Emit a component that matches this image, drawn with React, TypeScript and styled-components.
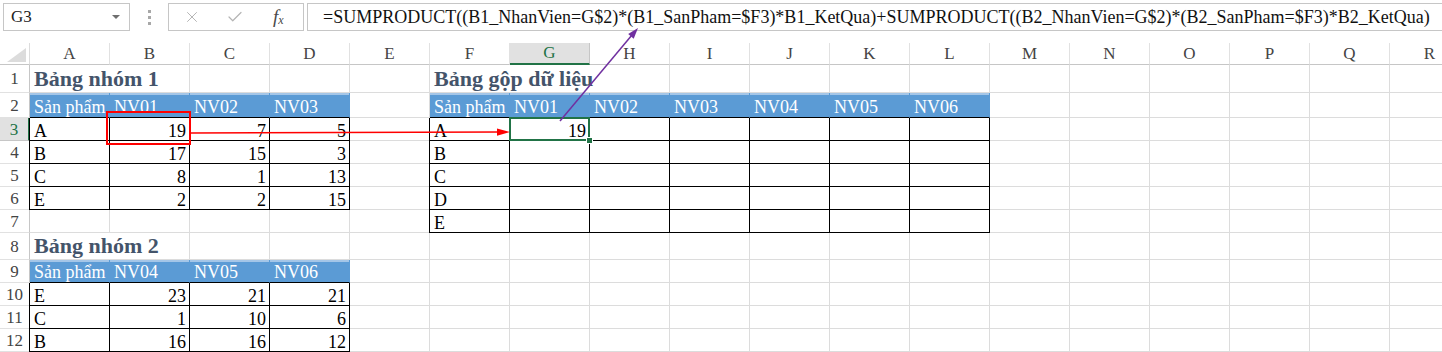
import React from 'react';
import styled, { createGlobalStyle, css } from 'styled-components';
import { X, Check } from 'lucide-react';

const GlobalStyle = createGlobalStyle`
  html, body {
    margin: 0;
    padding: 0;
    background: #fff;
  }
  body {
    font-family: 'Liberation Serif', 'Times New Roman', serif;
  }
`;

const FORMULA =
  '=SUMPRODUCT((B1_NhanVien=G$2)*(B1_SanPham=$F3)*B1_KetQua)+SUMPRODUCT((B2_NhanVien=G$2)*(B2_SanPham=$F3)*B2_KetQua)';

const COLS = ['A', 'B', 'C', 'D', 'E', 'F', 'G', 'H', 'I', 'J', 'K', 'L', 'M', 'N', 'O', 'P', 'Q', 'R'];
const ROW_HEIGHTS = [28, 25, 23, 23, 23, 23, 23, 27, 23, 23, 23, 23];
const ACTIVE_COL = 6;
const ACTIVE_ROW = 3;

type Kind = 'blank' | 'title' | 'head' | 'data';
type Value = string | number | null;

interface CellDef {
  kind: Kind;
  value?: Value;
  span?: number;
  first?: boolean;
  selected?: boolean;
}

const cells: Record<string, CellDef> = {};
const key = (c: number, r: number) => `${c}:${r}`;

function addTable(col: number, row: number, title: string, titleSpan: number, header: string[], body: Value[][]) {
  cells[key(col, row)] = { kind: 'title', value: title, span: titleSpan };
  header.forEach((h, i) => {
    cells[key(col + i, row + 1)] = { kind: 'head', value: h };
  });
  body.forEach((line, j) => {
    line.forEach((v, i) => {
      cells[key(col + i, row + 2 + j)] = { kind: 'data', value: v, first: i === 0 };
    });
  });
}

addTable(0, 1, 'Bảng nhóm 1', 2, ['Sản phẩm', 'NV01', 'NV02', 'NV03'], [
  ['A', 19, 7, 5],
  ['B', 17, 15, 3],
  ['C', 8, 1, 13],
  ['E', 2, 2, 15],
]);

addTable(0, 8, 'Bảng nhóm 2', 2, ['Sản phẩm', 'NV04', 'NV05', 'NV06'], [
  ['E', 23, 21, 21],
  ['C', 1, 10, 6],
  ['B', 16, 16, 12],
]);

const empty = (n: number): Value[] => Array.from({ length: n }, () => null);
addTable(5, 1, 'Bảng gộp dữ liệu', 3, ['Sản phẩm', 'NV01', 'NV02', 'NV03', 'NV04', 'NV05', 'NV06'], [
  ['A', 19, ...empty(5)],
  ['B', ...empty(6)],
  ['C', ...empty(6)],
  ['D', ...empty(6)],
  ['E', ...empty(6)],
]);
cells[key(ACTIVE_COL, ACTIVE_ROW)].selected = true;

// arrow head polygon for a line ending at (x2,y2)
function arrowHead(x1: number, y1: number, x2: number, y2: number, len = 12, half = 4) {
  const dx = x2 - x1;
  const dy = y2 - y1;
  const d = Math.hypot(dx, dy);
  const ux = dx / d;
  const uy = dy / d;
  const bx = x2 - ux * len;
  const by = y2 - uy * len;
  return `${x2},${y2} ${bx - uy * half},${by + ux * half} ${bx + uy * half},${by - ux * half}`;
}

const App: React.FC = () => {
  const rows = ROW_HEIGHTS.map((_, ri) => {
    const r = ri + 1;
    const out: React.ReactNode[] = [
      <RowHead key={`rh${r}`} $active={r === ACTIVE_ROW}>
        {r}
      </RowHead>,
    ];
    let c = 0;
    while (c < COLS.length) {
      const def = cells[key(c, r)] ?? { kind: 'blank' };
      const span = def.span ?? 1;
      out.push(
        <Cell
          key={`${c}-${r}`}
          $kind={def.kind}
          $span={span}
          $first={!!def.first}
          $selected={!!def.selected}
          $numeric={typeof def.value === 'number'}
        >
          {def.value}
        </Cell>
      );
      c += span;
    }
    return out;
  });

  return (
    <Page>
      <GlobalStyle />
      <FormulaBar>
        <NameBox>
          G3
          <Caret />
        </NameBox>
        <Grip>
          <Dot />
          <Dot />
          <Dot />
        </Grip>
        <FxBox>
          <X size={18} strokeWidth={1.3} color="#b4b4b4" />
          <Check size={18} strokeWidth={1.6} color="#b4b4b4" />
          <FxLabel>
            f<sub>x</sub>
          </FxLabel>
        </FxBox>
        <FormulaInput>{FORMULA}</FormulaInput>
      </FormulaBar>

      <Sheet>
        <Corner>
          <svg width="30" height="22" viewBox="0 0 30 22">
            <polygon points="7,19 26,19 26,5" fill="#dcdcdc" />
          </svg>
        </Corner>
        {COLS.map((col, i) => (
          <ColHead key={col} $active={i === ACTIVE_COL}>
            {col}
          </ColHead>
        ))}
        {rows}
      </Sheet>

      <Overlay width="1442" height="352" viewBox="0 0 1442 352">
        <rect x="107" y="112" width="83" height="32" fill="none" stroke="#ff0000" strokeWidth="2" />
        <line x1="191" y1="133" x2="500" y2="132" stroke="#ff0000" strokeWidth="1.5" />
        <polygon points={arrowHead(191, 133, 510, 132, 13, 3.6)} fill="#ff0000" />
        <line x1="560" y1="121" x2="632" y2="35" stroke="#7030a0" strokeWidth="1.5" />
        <polygon points={arrowHead(560, 121, 638, 28, 11, 3.6)} fill="#7030a0" />
      </Overlay>
    </Page>
  );
};

// --- Styled Components ---

const Page = styled.div`
  position: relative;
  width: 1442px;
  height: 352px;
  overflow: hidden;
  background: #fff;
  color: #000;
`;

const FormulaBar = styled.div`
  display: flex;
  align-items: flex-start;
  height: 43px;
  box-sizing: border-box;
  padding: 3px 0 0 3px;
`;

const NameBox = styled.div`
  display: flex;
  align-items: center;
  justify-content: space-between;
  box-sizing: border-box;
  width: 127px;
  height: 28px;
  padding: 0 9px 0 7px;
  border: 1px solid #c6c6c6;
  font-size: 17px;
  color: #222;
`;

const Caret = styled.span`
  width: 0;
  height: 0;
  border-left: 4px solid transparent;
  border-right: 4px solid transparent;
  border-top: 4px solid #6f6f6f;
`;

const Grip = styled.div`
  display: flex;
  flex-direction: column;
  align-items: center;
  justify-content: center;
  gap: 3px;
  width: 38px;
  height: 28px;
`;

const Dot = styled.span`
  width: 3px;
  height: 3px;
  background: #a8a8a8;
`;

const FxBox = styled.div`
  display: flex;
  align-items: center;
  box-sizing: border-box;
  width: 136px;
  height: 28px;
  padding: 0 0 0 14px;
  gap: 25px;
  border: 1px solid #c6c6c6;
`;

const FxLabel = styled.span`
  margin-left: 4px;
  font-style: italic;
  font-size: 19px;
  color: #4a4a4a;

  sub {
    font-size: 12px;
    vertical-align: -1px;
  }
`;

const FormulaInput = styled.div`
  flex: 1;
  display: flex;
  align-items: center;
  box-sizing: border-box;
  height: 28px;
  margin-left: 3px;
  padding-left: 15px;
  border: 1px solid #c6c6c6;
  border-right: none;
  font-size: 18px;
  color: #111;
  white-space: nowrap;
  overflow: hidden;
`;

const Sheet = styled.div`
  display: grid;
  grid-template-columns: 30px repeat(${COLS.length}, 80px);
  grid-template-rows: 22px ${ROW_HEIGHTS.map((h) => `${h}px`).join(' ')};
`;

const Corner = styled.div`
  box-sizing: border-box;
  border-right: 1px solid #dcdcdc;
  border-bottom: 1px solid #c6c6c6;
  svg {
    display: block;
  }
`;

const ColHead = styled.div<{ $active: boolean }>`
  display: flex;
  align-items: center;
  justify-content: center;
  box-sizing: border-box;
  border-right: 1px solid #e1e1e1;
  border-bottom: 1px solid #c6c6c6;
  font-size: 17px;
  color: #444;

  ${(p) =>
    p.$active &&
    css`
      background: #e1e1e1;
      color: #217346;
      border-bottom: 2px solid #217346;
      border-right-color: #c6c6c6;
    `}
`;

const RowHead = styled.div<{ $active: boolean }>`
  display: flex;
  align-items: center;
  justify-content: center;
  box-sizing: border-box;
  border-right: 1px solid #c6c6c6;
  border-bottom: 1px solid #e1e1e1;
  font-size: 17px;
  color: #444;
  padding-top: 1px;

  ${(p) =>
    p.$active &&
    css`
      background: #e1e1e1;
      color: #217346;
      border-right: 2px solid #217346;
      border-bottom-color: #c6c6c6;
    `}
`;

const Cell = styled.div<{
  $kind: Kind;
  $span: number;
  $first: boolean;
  $selected: boolean;
  $numeric: boolean;
}>`
  grid-column: span ${(p) => p.$span};
  display: flex;
  align-items: flex-end;
  justify-content: ${(p) => (p.$numeric ? 'flex-end' : 'flex-start')};
  box-sizing: border-box;
  padding: 0 3px 0 4px;
  border-right: 1px solid #dcdcdc;
  border-bottom: 1px solid #dcdcdc;
  font-size: 18px;
  line-height: 18px;
  white-space: nowrap;
  min-width: 0;

  ${(p) =>
    p.$kind === 'title' &&
    css`
      font-size: 22px;
      line-height: 24px;
      font-weight: bold;
      color: #44546a;
      padding-bottom: 1px;
    `}

  ${(p) =>
    p.$kind === 'head' &&
    css`
      background: #5b9bd5;
      color: #fff;
      border-right-color: #5b9bd5;
      border-bottom-color: #000;
      box-shadow: inset 0 2px 0 #a4c6e8;
      padding-bottom: 1px;
    `}

  ${(p) =>
    p.$kind === 'data' &&
    css`
      border-right-color: #000;
      border-bottom-color: #000;
    `}

  ${(p) =>
    p.$first &&
    css`
      box-shadow: -1px 0 0 #000;
    `}

  ${(p) =>
    p.$selected &&
    css`
      position: relative;
      z-index: 2;

      &::before {
        content: '';
        position: absolute;
        top: -1px;
        left: -1px;
        right: -1px;
        bottom: -1px;
        border: 2px solid #217346;
      }

      &::after {
        content: '';
        position: absolute;
        right: -4px;
        bottom: -4px;
        width: 5px;
        height: 5px;
        background: #217346;
        border: 1px solid #fff;
      }
    `}
`;

const Overlay = styled.svg`
  position: absolute;
  top: 0;
  left: 0;
  pointer-events: none;
  z-index: 5;
`;

export default App;
